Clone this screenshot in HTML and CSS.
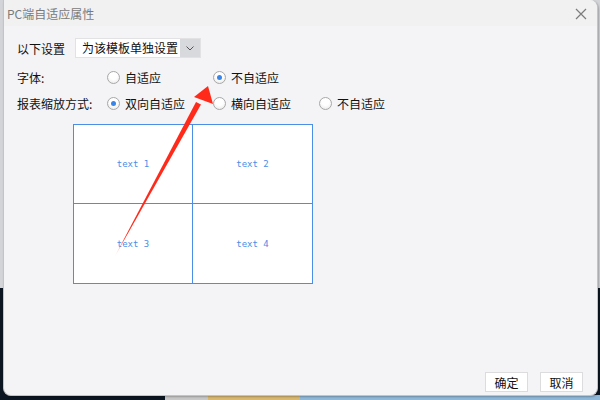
FILE: index.html
```html
<!DOCTYPE html>
<html>
<head>
    <title>PC端自适应属性</title>
    <link rel="stylesheet" href="styles.css">
</head>
<body>
    <div class="backdrop-strip"></div>
    <div class="dialog">
        <div class="titlebar">
            <span class="title">PC端自适应属性</span>
            <svg class="close" width="12" height="12" viewBox="0 0 12 12">
                <path d="M1 1 L11 11 M11 1 L1 11" stroke="#7c7c7c" stroke-width="1.2" fill="none"/>
            </svg>
        </div>
        <div class="body">
            <div class="row first">
                <span class="label short">以下设置</span>
                <div class="select">
                    <span class="select-value">为该模板单独设置</span>
                    <span class="select-btn">
                        <svg width="8" height="5" viewBox="0 0 8 5">
                            <path d="M0.5 0.5 L4 4 L7.5 0.5" stroke="#555" stroke-width="1" fill="none"/>
                        </svg>
                    </span>
                </div>
            </div>
            <div class="row">
                <span class="label">字体:</span>
                <label class="option"><span class="radio"></span>自适应</label>
                <label class="option"><span class="radio checked"></span>不自适应</label>
            </div>
            <div class="row">
                <span class="label">报表缩放方式:</span>
                <label class="option"><span class="radio checked"></span>双向自适应</label>
                <label class="option"><span class="radio"></span>横向自适应</label>
                <label class="option"><span class="radio"></span>不自适应</label>
            </div>
            <div class="preview">
                <div class="cell">text 1</div>
                <div class="cell">text 2</div>
                <div class="cell">text 3</div>
                <div class="cell">text 4</div>
            </div>
        </div>
        <div class="footer">
            <button>确定</button>
            <button>取消</button>
        </div>
        <svg class="annotation" width="600" height="400" viewBox="0 0 600 400">
            <defs>
                <linearGradient id="fade" x1="113" y1="258" x2="200" y2="100" gradientUnits="userSpaceOnUse">
                    <stop offset="0" stop-color="#ff2a1a" stop-opacity="0"/>
                    <stop offset="0.12" stop-color="#ff2a1a" stop-opacity="1"/>
                    <stop offset="1" stop-color="#ff2a1a"/>
                </linearGradient>
            </defs>
            <polygon points="113,258 195,102 200,104.5" fill="url(#fade)"/>
            <polygon points="207,86 212,104 193,97" fill="#ff2a1a"/>
        </svg>
    </div>
</body>
</html>
```

FILE: styles.css
```css
body {
    margin: 0;
    width: 600px;
    height: 400px;
    overflow: hidden;
    position: relative;
    background: linear-gradient(to bottom, #d2d4d8 0, #d2d4d8 288px, #0c1622 288px);
    font-family: "Noto Sans CJK SC", "Liberation Sans", sans-serif;
    font-size: 12px;
    color: #111;
}
.backdrop-strip {
    position: absolute;
    left: 0;
    bottom: 0;
    width: 600px;
    height: 5px;
    background: linear-gradient(to right, #0c1622 0, #0c1622 165px, #c8c8c8 165px, #c8c8c8 208px, #d9b870 208px, #d9b870 300px, #8fb8d8 300px);
}
.dialog {
    position: relative;
    margin-left: 3px;
    width: 593px;
    height: 395px;
    background: #f4f4f6;
    border: 1px solid #c4c4c6;
    border-top: none;
    border-radius: 0 8px 8px 8px;
    box-shadow: 1px 1px 2px rgba(0, 0, 0, 0.25);
    display: flex;
    flex-direction: column;
    overflow: hidden;
}
.titlebar {
    height: 26px;
    background: #f1f1f2;
    display: flex;
    align-items: center;
    justify-content: space-between;
    padding: 0 10px 0 3px;
}
.title {
    color: #7a7a7a;
    font-size: 12px;
}
.close {
    margin-top: 1px;
}
.body {
    flex: 1;
    padding: 12px 0 0 13px;
}
.row {
    display: flex;
    align-items: center;
    height: 26px;
    white-space: nowrap;
}
.row.first {
    height: 20px;
    margin-bottom: 6px;
}
.label {
    width: 90px;
}
.label.short {
    width: 58px;
}
.select {
    display: flex;
    height: 20px;
    border: 1px solid #e2e2e4;
    box-sizing: border-box;
}
.select-value {
    background: #fff;
    width: 98px;
    padding-left: 6px;
    line-height: 18px;
    white-space: nowrap;
}
.select-btn {
    width: 20px;
    background: #d8d9dc;
    display: flex;
    align-items: center;
    justify-content: center;
}
.option {
    display: flex;
    align-items: center;
    width: 106px;
}
.radio {
    width: 11px;
    height: 11px;
    border-radius: 50%;
    border: 1px solid #a8a8a8;
    background: radial-gradient(circle at 50% 35%, #fff 0, #fff 40%, #e4e4e4 100%);
    margin-right: 5px;
    position: relative;
}
.radio.checked::after {
    content: "";
    position: absolute;
    left: 3px;
    top: 3px;
    width: 5px;
    height: 5px;
    border-radius: 50%;
    background: #3a86e8;
}
.preview {
    margin: 8px 0 0 56px;
    width: 240px;
    height: 160px;
    box-sizing: border-box;
    border: 1px solid #4a8ee8;
    background: #4a8ee8;
    display: grid;
    grid-template-columns: 118px 119px;
    grid-template-rows: 78px 79px;
    gap: 1px;
}
.cell {
    background: #fff;
    display: flex;
    align-items: center;
    justify-content: center;
    color: #4a8ee8;
    font-family: "DejaVu Sans Mono", monospace;
    font-size: 9px;
}
.footer {
    display: flex;
    justify-content: flex-end;
    gap: 12px;
    padding: 0 14px 3px 0;
}
button {
    width: 43px;
    height: 20px;
    padding: 0;
    background: #fff;
    border: 1px solid #dcdcde;
    font-family: "Noto Sans CJK SC", sans-serif;
    font-size: 12px;
    color: #111;
}
.annotation {
    position: absolute;
    left: -3px;
    top: 0;
    pointer-events: none;
}
```
